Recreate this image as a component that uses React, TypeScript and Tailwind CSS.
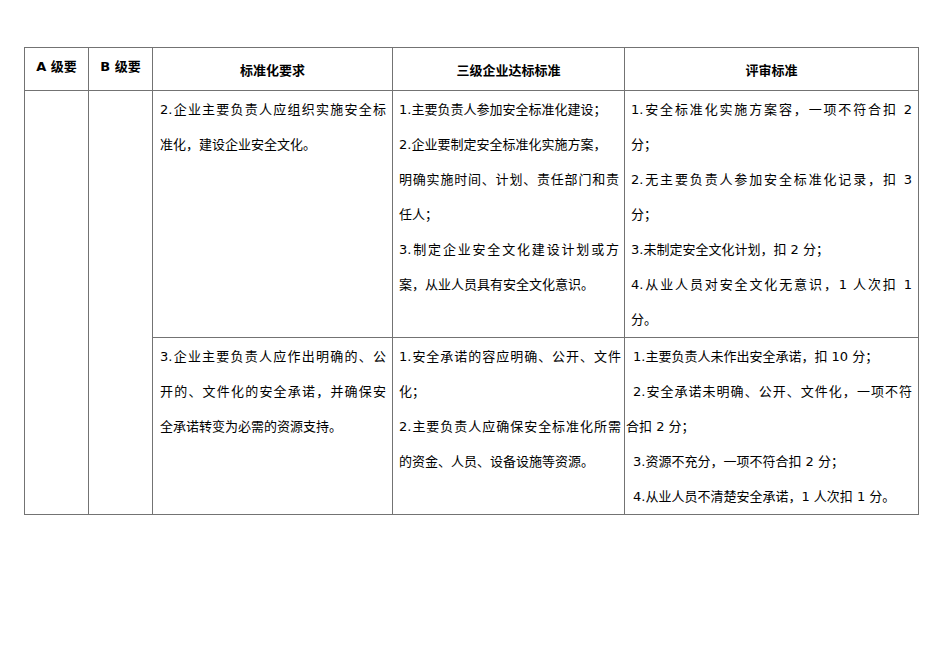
import React from "react";

type Line = { t: string; j?: boolean; ind?: boolean };

const J = "text-justify [text-align-last:justify]";

function Lines({ lines }: { lines: Line[] }) {
  return (
    <>
      {lines.map((l, i) => (
        <div
          key={i}
          className={`${l.j ? J : "text-left whitespace-nowrap"} ${l.ind ? "pl-[7px]" : ""}`}
        >
          {l.t}
        </div>
      ))}
    </>
  );
}

const r1c3: Line[] = [
  { t: "2.企业主要负责人应组织实施安全标", j: true },
  { t: "准化，建设企业安全文化。" },
];
const r1c4: Line[] = [
  { t: "1.主要负责人参加安全标准化建设；" },
  { t: "2.企业要制定安全标准化实施方案，" },
  { t: "明确实施时间、计划、责任部门和责", j: true },
  { t: "任人；" },
  { t: "3.制定企业安全文化建设计划或方", j: true },
  { t: "案，从业人员具有安全文化意识。" },
];
const r1c5: Line[] = [
  { t: "1.安全标准化实施方案容，一项不符合扣 2", j: true },
  { t: "分；" },
  { t: "2.无主要负责人参加安全标准化记录，扣 3", j: true },
  { t: "分；" },
  { t: "3.未制定安全文化计划，扣 2 分；" },
  { t: "4.从业人员对安全文化无意识，1 人次扣 1", j: true },
  { t: "分。" },
];
const r2c3: Line[] = [
  { t: "3.企业主要负责人应作出明确的、公", j: true },
  { t: "开的、文件化的安全承诺，并确保安", j: true },
  { t: "全承诺转变为必需的资源支持。" },
];
const r2c4: Line[] = [
  { t: "1.安全承诺的容应明确、公开、文件", j: true },
  { t: "化；" },
  { t: "2.主要负责人应确保安全标准化所需", j: true },
  { t: "的资金、人员、设备设施等资源。" },
];
const r2c5: Line[] = [
  { t: "1.主要负责人未作出安全承诺，扣 10 分；", ind: true },
  { t: "2.安全承诺未明确、公开、文件化，一项不符", j: true, ind: true },
  { t: "合扣 2 分；" },
  { t: "3.资源不充分，一项不符合扣 2 分；", ind: true },
  { t: "4.从业人员不清楚安全承诺，1 人次扣 1 分。", ind: true },
];

export default function App() {
  const font = {
    fontFamily: '"DejaVu Sans", "Noto Sans CJK SC", sans-serif',
  };
  const bd = "border border-[#737373]";
  return (
    <div className="w-[950px] h-[672px] bg-white text-black" style={font}>
      <div className="pt-[47px] pl-[24px]">
        <table className="table-fixed border-collapse w-[894px] text-[13px]">
          <colgroup>
            <col className="w-[64px]" />
            <col className="w-[64px]" />
            <col className="w-[240px]" />
            <col className="w-[232px]" />
            <col className="w-[294px]" />
          </colgroup>
          <thead>
            <tr className="h-[43px]">
              <th className={`${bd} align-top pt-[10px] font-bold leading-[18px] text-center`}>A 级要</th>
              <th className={`${bd} align-top pt-[10px] font-bold leading-[18px] text-center`}>B 级要</th>
              <th className={`${bd} align-top pt-[14px] font-bold leading-[18px] text-center`}>标准化要求</th>
              <th className={`${bd} align-top pt-[14px] font-bold leading-[18px] text-center`}>三级企业达标标准</th>
              <th className={`${bd} align-top pt-[14px] font-bold leading-[18px] text-center`}>评审标准</th>
            </tr>
          </thead>
          <tbody className="leading-[35px]">
            <tr className="h-[247px]">
              <td rowSpan={2} className={bd}></td>
              <td rowSpan={2} className={bd}></td>
              <td className={`${bd} align-top pt-[1px] pl-[7px] pr-[6px]`}>
                <Lines lines={r1c3} />
              </td>
              <td className={`${bd} align-top pt-[1px] pl-[6px] pr-[5px]`}>
                <Lines lines={r1c4} />
              </td>
              <td className={`${bd} align-top pt-[1px] pl-[6px] pr-[6px]`}>
                <Lines lines={r1c5} />
              </td>
            </tr>
            <tr className="h-[177px]">
              <td className={`${bd} align-top pt-[1px] pl-[7px] pr-[6px]`}>
                <Lines lines={r2c3} />
              </td>
              <td className={`${bd} align-top pt-[1px] pl-[6px] pr-[3px]`}>
                <Lines lines={r2c4} />
              </td>
              <td className={`${bd} align-top pt-[1px] pl-[1px] pr-[6px]`}>
                <Lines lines={r2c5} />
              </td>
            </tr>
          </tbody>
        </table>
      </div>
    </div>
  );
}
